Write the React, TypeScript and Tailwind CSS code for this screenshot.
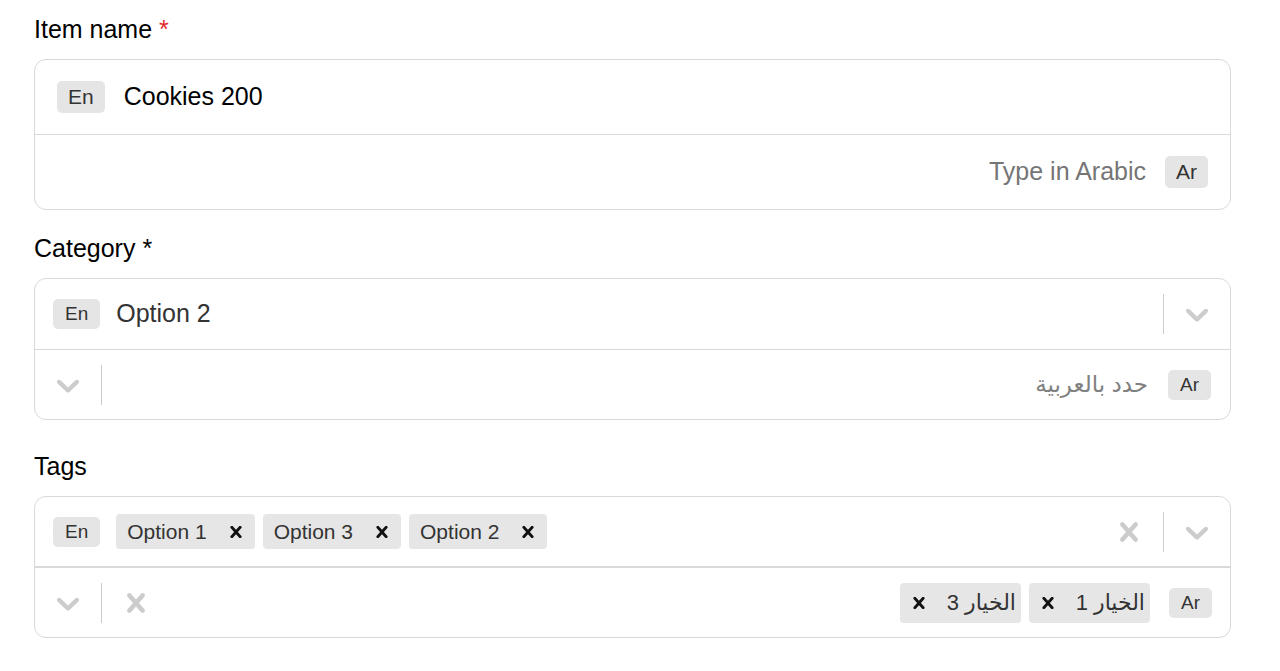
import React from 'react';

const chevronPath =
  'M4.516 7.548c0.436-0.446 1.043-0.481 1.576 0l3.908 3.747 3.908-3.747c0.533-0.481 1.141-0.446 1.574 0 0.436 0.445 0.408 1.197 0 1.615-0.406 0.418-4.695 4.502-4.695 4.502-0.217 0.223-0.502 0.335-0.787 0.335s-0.57-0.112-0.789-0.335c0 0-4.287-4.084-4.695-4.502s-0.436-1.17 0-1.615z';
const crossPath =
  'M14.348 14.849c-0.469 0.469-1.229 0.469-1.697 0l-2.651-3.030-2.651 3.029c-0.469 0.469-1.229 0.469-1.697 0-0.469-0.469-0.469-1.229 0-1.697l2.758-3.150-2.759-3.152c-0.469-0.469-0.469-1.228 0-1.697s1.228-0.469 1.697 0l2.652 3.031 2.651-3.031c0.469-0.469 1.228-0.469 1.697 0s0.469 1.229 0 1.697l-2.758 3.152 2.758 3.150c0.469 0.469 0.469 1.229 0 1.698z';

function ChevronIcon({ className = '' }: { className?: string }) {
  return (
    <svg viewBox="0 0 20 20" fill="currentColor" aria-hidden="true" className={className}>
      <path d={chevronPath} />
    </svg>
  );
}

function CrossIcon({ className = '', viewBox = '0 0 20 20' }: { className?: string; viewBox?: string }) {
  return (
    <svg viewBox={viewBox} fill="currentColor" aria-hidden="true" className={className}>
      <path d={crossPath} />
    </svg>
  );
}

function LangBadge({ children, large }: { children: React.ReactNode; large?: boolean }) {
  return large ? (
    <span className="h-[32px] shrink-0 rounded-[5px] bg-[#e5e5e5] px-[11px] text-[21px] leading-[32px] text-[#333]">
      {children}
    </span>
  ) : (
    <span className="h-[30px] shrink-0 rounded-[5px] bg-[#e5e5e5] px-[12px] text-[19px] leading-[30px] text-[#333]">
      {children}
    </span>
  );
}

function Separator() {
  return <span className="h-[40px] w-px shrink-0 bg-[#cccccc]" />;
}

function DropdownIndicator() {
  return (
    <span className="flex w-[66px] shrink-0 justify-center text-[#cccccc]">
      <ChevronIcon className="h-[38px] w-[38px]" />
    </span>
  );
}

function ClearIndicator() {
  return (
    <span className="flex w-[68px] shrink-0 justify-center text-[#cccccc]">
      <CrossIcon className="h-[38px] w-[38px]" />
    </span>
  );
}

function TagChip({ label }: { label: string }) {
  return (
    <span className="flex h-[35px] items-center rounded-[4px] bg-[#e6e6e6] pl-[11px] pr-[13px]">
      <span className="text-[21px] text-[#333]">{label}</span>
      <CrossIcon viewBox="5 5 10 10" className="ml-[23px] h-[12px] w-[12px] text-[#111]" />
    </span>
  );
}

function ArabicChip({ label }: { label: string }) {
  return (
    <span className="flex h-[40px] w-[121px] items-center justify-between rounded-[4px] bg-[#e6e6e6] pl-[13px] pr-[5px]">
      <span className="text-[22px] text-[#333]">{label}</span>
      <CrossIcon viewBox="5 5 10 10" className="h-[12px] w-[12px] text-[#111]" />
    </span>
  );
}

export default function App() {
  return (
    <div className="min-h-screen bg-white px-[34px] pt-[14px] font-['Liberation_Sans',Arial,'DejaVu_Sans',sans-serif] text-black">
      <div className="w-[1197px]">
        {/* Item name */}
        <label className="mb-[15px] block text-[25px] leading-[30px]">
          Item name <span className="text-[#e42d2d]">*</span>
        </label>
        <div className="rounded-[12px] border border-[#d9d9d9]">
          <div className="flex h-[75px] items-center gap-[19px] border-b border-[#d9d9d9] pl-[22px]">
            <LangBadge large>En</LangBadge>
            <span className="text-[25px] text-black">Cookies 200</span>
          </div>
          <div dir="rtl" className="flex h-[74px] items-center gap-[19px] pr-[22px]">
            <LangBadge large>Ar</LangBadge>
            <span className="text-[25px] text-[#757575]">Type in Arabic</span>
          </div>
        </div>

        {/* Category */}
        <label className="mb-[15px] mt-[23px] block text-[25px] leading-[30px]">Category *</label>
        <div className="rounded-[12px] border border-[#d9d9d9]">
          <div className="flex h-[71px] items-center border-b border-[#d9d9d9] pl-[18px]">
            <LangBadge>En</LangBadge>
            <span className="ml-[16px] flex-1 text-[25px] text-[#333]">Option 2</span>
            <Separator />
            <DropdownIndicator />
          </div>
          <div dir="rtl" className="flex h-[69px] items-center pr-[19px]">
            <LangBadge>Ar</LangBadge>
            <span className="mr-[20px] flex-1 text-[23px] text-[#808080]">حدد بالعربية</span>
            <Separator />
            <DropdownIndicator />
          </div>
        </div>

        {/* Tags */}
        <label className="mb-[15px] mt-[31px] block text-[25px] leading-[30px]">Tags</label>
        <div className="rounded-[12px] border border-[#d9d9d9]">
          <div className="flex h-[71px] items-center border-b-2 border-[#d9d9d9] pl-[18px]">
            <LangBadge>En</LangBadge>
            <div className="ml-[16px] flex flex-1 items-center gap-[8px]">
              <TagChip label="Option 1" />
              <TagChip label="Option 3" />
              <TagChip label="Option 2" />
            </div>
            <ClearIndicator />
            <Separator />
            <DropdownIndicator />
          </div>
          <div dir="rtl" className="flex h-[69px] items-center pr-[18px]">
            <LangBadge>Ar</LangBadge>
            <div className="mr-[19px] flex flex-1 items-center gap-[8px]">
              <ArabicChip label="الخيار 1" />
              <ArabicChip label="الخيار 3" />
            </div>
            <ClearIndicator />
            <Separator />
            <DropdownIndicator />
          </div>
        </div>
      </div>
    </div>
  );
}
